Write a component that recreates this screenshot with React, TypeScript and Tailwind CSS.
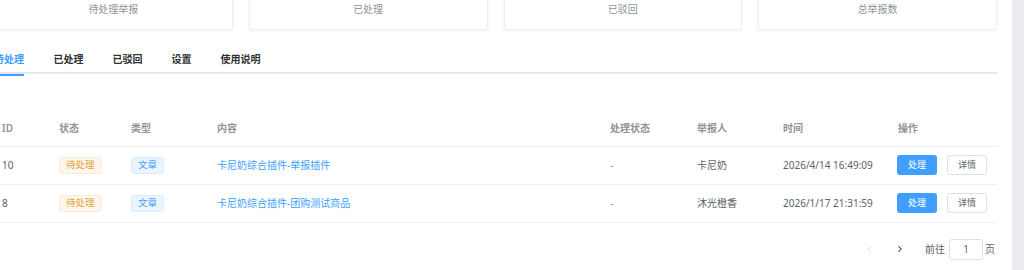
import { ChevronLeft, ChevronRight } from "lucide-react";

const STATS = ["待处理举报", "已处理", "已驳回", "总举报数"];
const TABS = ["待处理", "已处理", "已驳回", "设置", "使用说明"];

const ROWS = [
  { id: 10, content: "卡尼奶综合插件-举报插件", user: "卡尼奶", time: "2026/4/14 16:49:09" },
  { id: 8, content: "卡尼奶综合插件-团购测试商品", user: "沐光橙香", time: "2026/1/17 21:31:59" },
];

const COLS = [
  { label: "ID", w: "w-[57px]" },
  { label: "状态", w: "w-[72px]" },
  { label: "类型", w: "w-[86px]" },
  { label: "内容", w: "w-[393px]" },
  { label: "处理状态", w: "w-[87px]" },
  { label: "举报人", w: "w-[86px]" },
  { label: "时间", w: "w-[115px]" },
  { label: "操作", w: "w-[107px]" },
];

export default function App() {
  return (
    <div
      className="flex h-[270px] w-[1024px] overflow-hidden bg-white text-[10px] text-[#606266]"
      style={{ fontFamily: "'Noto Sans', 'Noto Sans CJK SC', sans-serif" }}
    >
      <div className="w-[1012px] overflow-hidden">
        <div className="ml-[-6px] w-[1003px]">
          {/* Stat cards */}
          <div className="mt-[-42px] grid grid-cols-4 gap-4">
            {STATS.map((s) => (
              <div
                key={s}
                className="flex flex-col items-center gap-[6px] rounded-[3px] border border-[#ebeef5] bg-white py-[14px] shadow-[0_1px_4px_rgba(0,0,0,0.06)]"
              >
                <div className="h-[24px] text-[18px] leading-[24px] font-semibold text-[#303133]">0</div>
                <div className="h-[12px] leading-[12px] text-[#909399]">{s}</div>
              </div>
            ))}
          </div>

          {/* Tabs */}
          <div className="mt-[15px] flex h-[29px] border-b-[2px] border-[#e4e7ed]">
            {TABS.map((t, i) => (
              <div
                key={t}
                className={`relative flex h-[29px] items-center text-[10px] font-semibold ${
                  i === 0 ? "pr-[15px] text-[#409eff]" : "px-[14.5px] text-[#303133]"
                }`}
              >
                {t}
                {i === 0 && (
                  <div className="absolute bottom-[-2px] left-0 right-[15px] h-[2px] bg-[#409eff]" />
                )}
              </div>
            ))}
          </div>

          {/* Table */}
          <table className="mt-[38px] table-fixed border-collapse">
            <thead>
              <tr className="h-[34px] border-b border-[#ebeef5]">
                {COLS.map((c) => (
                  <th key={c.label} className={`${c.w} px-[8px] text-left text-[10px] font-semibold text-[#909399]`}>
                    {c.label}
                  </th>
                ))}
              </tr>
            </thead>
            <tbody>
              {ROWS.map((r) => (
                <tr key={r.id} className="h-[38px] border-b border-[#ebeef5]">
                  <td className="px-[8px]">{r.id}</td>
                  <td className="px-[8px]">
                    <span className="inline-flex h-[17px] items-center rounded-[3px] border border-[#faecd8] bg-[#fdf6ec] px-[6px] text-[9.5px] text-[#e6a23c]">
                      待处理
                    </span>
                  </td>
                  <td className="px-[8px]">
                    <span className="inline-flex h-[17px] items-center rounded-[3px] border border-[#d9ecff] bg-[#ecf5ff] px-[6px] text-[9.5px] text-[#409eff]">
                      文章
                    </span>
                  </td>
                  <td className="px-[8px] text-[#409eff]">{r.content}</td>
                  <td className="px-[8px] text-[#909399]">-</td>
                  <td className="px-[8px] text-[#606266]">{r.user}</td>
                  <td className="px-[8px] text-[#606266]">{r.time}</td>
                  <td className="px-[7px]">
                    <div className="flex gap-[10px]">
                      <button className="flex h-[20px] w-[40px] items-center justify-center rounded-[3px] bg-[#409eff] text-[9px] text-white">
                        处理
                      </button>
                      <button className="flex h-[20px] w-[40px] items-center justify-center rounded-[3px] border border-[#dcdfe6] bg-white text-[9px] text-[#606266]">
                        详情
                      </button>
                    </div>
                  </td>
                </tr>
              ))}
            </tbody>
          </table>

          {/* Pagination */}
          <div className="mt-[16px] flex h-[21px] items-center justify-end pr-[2px]">
            <ChevronLeft size={10} strokeWidth={1.5} className="text-[#c0c4cc]" />
            <ChevronRight size={10} strokeWidth={2.5} className="ml-[21px] text-[#303133]" />
            <span className="ml-[20px] text-[#606266]">前往</span>
            <div className="ml-[4px] flex h-[21px] w-[34px] items-center justify-center rounded-[3px] border border-[#dcdfe6] text-[#606266]">
              1
            </div>
            <span className="ml-[2px] text-[#606266]">页</span>
          </div>
        </div>
      </div>
      <div className="h-full w-[12px] bg-[#ececf0]" />
    </div>
  );
}
